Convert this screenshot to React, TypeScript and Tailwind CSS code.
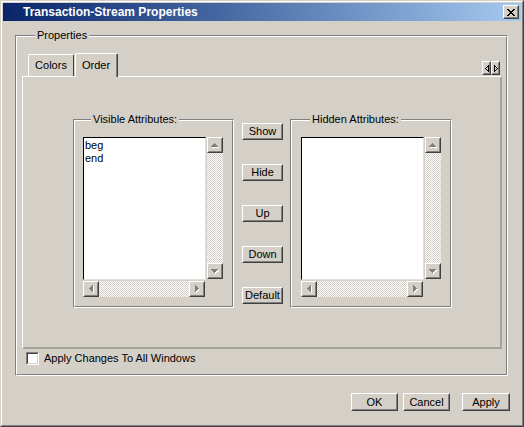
import React from "react";

type P = { className?: string; children?: React.ReactNode };

function Raised({ className = "", children }: P) {
  return (
    <div
      className={`border border-t-white border-l-white border-r-[#404040] border-b-[#404040] bg-[#d4d0c8] ${className}`}
    >
      <div className="flex h-full w-full items-center justify-center border border-t-[#d4d0c8] border-l-[#d4d0c8] border-r-[#808080] border-b-[#808080]">
        {children}
      </div>
    </div>
  );
}

function PushButton({ label, className = "" }: { label: string; className?: string }) {
  return (
    <Raised className={className}>
      <span className="text-[11px] leading-[13px] text-black">{label}</span>
    </Raised>
  );
}

function Arrow({ dir }: { dir: "up" | "down" | "left" | "right" }) {
  const rows = [
    [3, 1],
    [2, 3],
    [1, 5],
    [0, 7],
  ];
  const rects: { x: number; y: number; w: number; h: number }[] = [];
  rows.forEach(([x, w], i) => {
    if (dir === "up") rects.push({ x, y: i, w, h: 1 });
    if (dir === "down") rects.push({ x, y: 3 - i, w, h: 1 });
    if (dir === "left") rects.push({ x: i, y: x, w: 1, h: w });
    if (dir === "right") rects.push({ x: 3 - i, y: x, w: 1, h: w });
  });
  const vert = dir === "up" || dir === "down";
  const W = vert ? 8 : 5;
  const H = vert ? 5 : 8;
  return (
    <svg width={W} height={H} shapeRendering="crispEdges">
      {rects.map((r, i) => (
        <rect key={"w" + i} x={r.x + 1} y={r.y + 1} width={r.w} height={r.h} fill="#ffffff" />
      ))}
      {rects.map((r, i) => (
        <rect key={"g" + i} x={r.x} y={r.y} width={r.w} height={r.h} fill="#808080" />
      ))}
    </svg>
  );
}

const track =
  "bg-[image:repeating-conic-gradient(#ffffff_0%_25%,#d4d0c8_0%_50%)] bg-[length:2px_2px]";

function VScroll() {
  return (
    <div className="flex h-[142px] w-[16px] flex-col">
      <Raised className="h-[16px] w-[16px] shrink-0">
        <Arrow dir="up" />
      </Raised>
      <div className={`flex-1 ${track}`} />
      <Raised className="h-[16px] w-[16px] shrink-0">
        <Arrow dir="down" />
      </Raised>
    </div>
  );
}

function HScroll() {
  return (
    <div className="flex h-[16px] w-[122px]">
      <Raised className="h-[16px] w-[16px] shrink-0">
        <Arrow dir="left" />
      </Raised>
      <div className={`flex-1 ${track}`} />
      <Raised className="h-[16px] w-[16px] shrink-0">
        <Arrow dir="right" />
      </Raised>
    </div>
  );
}

function Etched({ className = "", children, label, labelLeft }: P & { label: string; labelLeft: string }) {
  return (
    <div
      className={`relative border border-t-[#808080] border-l-[#808080] border-r-white border-b-white ${className}`}
    >
      <span
        className={`absolute top-[-7px] ${labelLeft} bg-[#d4d0c8] px-[2px] text-[11px] leading-[13px] text-black whitespace-nowrap`}
      >
        {label}
      </span>
      <div className="h-full w-full border border-t-white border-l-white border-r-[#808080] border-b-[#808080]">
        {children}
      </div>
    </div>
  );
}

function ListGroup({
  label,
  items,
  className,
  padLeft,
  labelLeft,
}: {
  label: string;
  items: string[];
  className: string;
  padLeft: string;
  labelLeft: string;
}) {
  return (
    <Etched label={label} labelLeft={labelLeft} className={className}>
      <div className={`${padLeft} pt-[16px]`}>
        <div className="grid grid-cols-[123px_16px] grid-rows-[143px_16px] gap-x-px gap-y-px">
          <div className="border border-t-black border-l-black border-r-[#e2e0da] border-b-[#e2e0da] bg-white pl-px pt-px">
            {items.map((t) => (
              <div key={t} className="text-[11px] leading-[13px] text-black">
                {t}
              </div>
            ))}
          </div>
          <VScroll />
          <HScroll />
          <div />
        </div>
      </div>
    </Etched>
  );
}

function TabArrows() {
  const left = [
    [3, 0],
    [2, 1],
    [1, 2],
    [0, 3],
    [1, 4],
    [2, 5],
    [3, 6],
  ];
  return (
    <div className="mb-[1px] mr-[1px] ml-auto flex">
      <Raised className="h-[14px] w-[9px]">
        <svg width={4} height={7} shapeRendering="crispEdges">
          {left.map(([x, y], i) => (
            <rect key={i} x={x} y={y} width={1} height={1} fill="#000" />
          ))}
          <rect x={3} y={0} width={1} height={7} fill="#000" />
        </svg>
      </Raised>
      <Raised className="h-[14px] w-[9px]">
        <svg width={4} height={7} shapeRendering="crispEdges">
          {left.map(([x, y], i) => (
            <rect key={i} x={3 - x} y={y} width={1} height={1} fill="#000" />
          ))}
          <rect x={0} y={0} width={1} height={7} fill="#000" />
        </svg>
      </Raised>
    </div>
  );
}

function CloseGlyph() {
  const rows: [number, number][][] = [
    [[0, 2], [6, 2]],
    [[1, 2], [5, 2]],
    [[2, 4]],
    [[3, 2]],
    [[2, 4]],
    [[1, 2], [5, 2]],
    [[0, 2], [6, 2]],
  ];
  return (
    <svg width={8} height={7} shapeRendering="crispEdges">
      {rows.flatMap((r, y) =>
        r.map(([x, w], j) => <rect key={`${y}-${j}`} x={x} y={y} width={w} height={1} fill="#000" />)
      )}
    </svg>
  );
}

export default function App() {
  return (
    <div className="h-[427px] w-[524px] border border-t-[#d4d0c8] border-l-[#d4d0c8] border-r-[#404040] border-b-[#404040] bg-[#d4d0c8] font-['Liberation_Sans',Arial,sans-serif] text-black">
      <div className="h-full w-full border border-t-white border-l-white border-r-[#808080] border-b-[#808080] p-px">
        {/* Title bar */}
        <div className="flex h-[18px] items-center bg-gradient-to-r from-[#0a246a] to-[#a6caf0] pl-[20px] pr-[2px]">
          <span className="text-[12px] font-bold leading-[14px] text-white">Transaction-Stream Properties</span>
          <Raised className="ml-auto h-[14px] w-[16px]">
            <CloseGlyph />
          </Raised>
        </div>

        {/* Properties group */}
        <Etched label="Properties" labelLeft="left-[19px]" className="ml-[12px] mt-[14px] h-[341px] w-[493px]">
          <div className="flex h-full flex-col px-[5px] pt-[14px]">
            {/* tabs */}
            <div className="flex h-[25px] items-end pl-[6px]">
              <div className="flex h-[22px] w-[46px] items-center justify-center rounded-tl-[2px] rounded-tr-[2px] border-l border-t border-r border-l-white border-t-white border-r-[#404040]">
                <span className="text-[11px] leading-[13px]">Colors</span>
              </div>
              <div className="relative z-10 mb-[-1px] ml-[1px] flex h-[24px] w-[43px] items-start justify-center rounded-tl-[2px] rounded-tr-[2px] border-l border-t border-r border-l-white border-t-white border-r-[#404040] bg-[#d4d0c8]">
                <div className="flex h-full w-full items-start justify-center border-r border-r-[#808080] pt-[5px]">
                  <span className="text-[11px] leading-[13px]">Order</span>
                </div>
              </div>
              <TabArrows />
            </div>
            {/* panel */}
            <div className="h-[273px] w-[480px] border border-t-white border-l-white border-r-[#a6a39c] border-b-[#a6a39c]">
              <div className="flex h-full w-full items-start border border-t-[#d4d0c8] border-l-[#d4d0c8] border-r-[#a6a39c] border-b-[#a6a39c] pl-[49px] pt-[41px]">
                <ListGroup
                  label="Visible Attributes:"
                  items={["beg", "end"]}
                  className="h-[189px] w-[161px]"
                  padLeft="pl-[8px]"
                  labelLeft="left-[17px]"
                />
                <div className="ml-[8px] mt-[4px] flex h-[181px] w-[41px] flex-col justify-between">
                  <PushButton label="Show" className="h-[17px] w-[41px]" />
                  <PushButton label="Hide" className="h-[17px] w-[41px]" />
                  <PushButton label="Up" className="h-[17px] w-[41px]" />
                  <PushButton label="Down" className="h-[17px] w-[41px]" />
                  <PushButton label="Default" className="h-[17px] w-[41px]" />
                </div>
                <ListGroup
                  label="Hidden Attributes:"
                  items={[]}
                  className="ml-[7px] h-[189px] w-[162px]"
                  padLeft="pl-[9px]"
                  labelLeft="left-[19px]"
                />
              </div>
            </div>
            {/* checkbox */}
            <div className="mt-[3px] flex items-center pl-[4px]">
              <div className="h-[13px] w-[13px] border border-t-[#808080] border-l-[#808080] border-r-white border-b-white">
                <div className="h-full w-full border border-t-[#404040] border-l-[#404040] border-r-[#d4d0c8] border-b-[#d4d0c8] bg-white" />
              </div>
              <span className="ml-[5px] text-[11px] leading-[13px]">Apply Changes To All Windows</span>
            </div>
          </div>
        </Etched>

        {/* bottom buttons */}
        <div className="mt-[17px] flex justify-end pr-[11px]">
          <PushButton label="OK" className="h-[18px] w-[47px]" />
          <PushButton label="Cancel" className="ml-[5px] h-[18px] w-[47px]" />
          <PushButton label="Apply" className="ml-[12px] h-[18px] w-[48px]" />
        </div>
      </div>
    </div>
  );
}
